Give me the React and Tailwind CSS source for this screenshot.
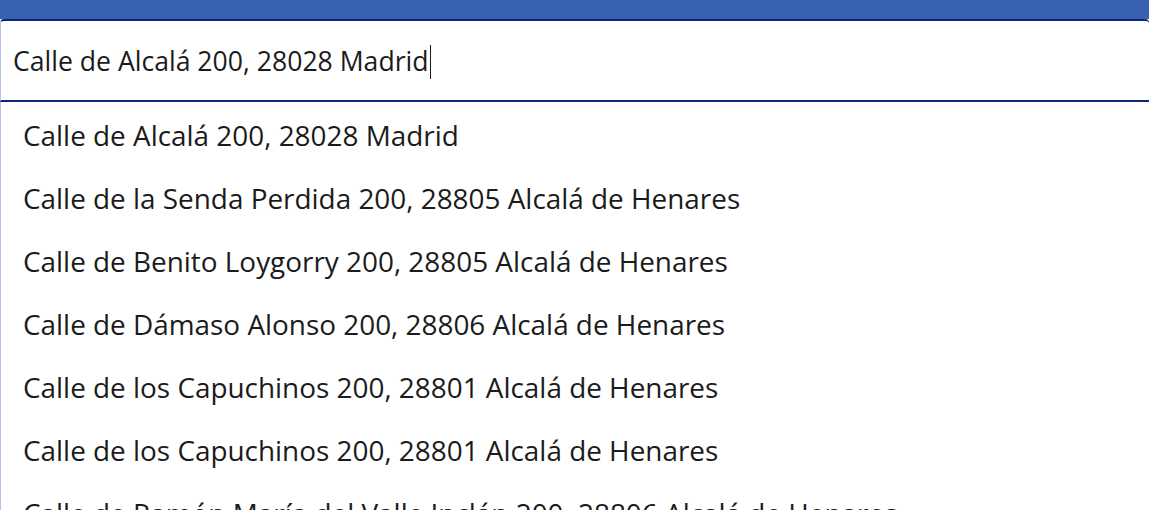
const suggestions = [
  "Calle de Alcalá 200, 28028 Madrid",
  "Calle de la Senda Perdida 200, 28805 Alcalá de Henares",
  "Calle de Benito Loygorry 200, 28805 Alcalá de Henares",
  "Calle de Dámaso Alonso 200, 28806 Alcalá de Henares",
  "Calle de los Capuchinos 200, 28801 Alcalá de Henares",
  "Calle de los Capuchinos 200, 28801 Alcalá de Henares",
  "Calle de Ramón María del Valle Inclán 200, 28806 Alcalá de Henares",
];

export default function App() {
  return (
    <div
      className="h-[510px] w-full overflow-hidden bg-white text-[#1b1b1b]"
      style={{ fontFamily: '"Open Sans", "Noto Sans", sans-serif' }}
    >
      <div className="h-[19px] bg-[#3862b1]" />

      {/* address input */}
      <div className="flex h-[83px] items-center rounded-t-[4px] border-t-2 border-b-2 border-l border-t-[#0f2579] border-b-[#0f2579] border-l-[#b4c2e6] bg-white pl-3 pt-[2px]">
        <span className="text-[26.6px] leading-none">Calle de Alcalá 200, 28028 Madrid</span>
        <span className="ml-px h-[34px] w-px bg-[#1b1b1b]" />
      </div>

      {/* suggestion list */}
      <ul className="border-l border-[#b4c2e6] pt-[2px]">
        {suggestions.map((s, i) => (
          <li key={i} className="flex h-[63px] items-center whitespace-nowrap pl-[22px] text-[27.9px] leading-none">
            {s}
          </li>
        ))}
      </ul>
    </div>
  );
}
